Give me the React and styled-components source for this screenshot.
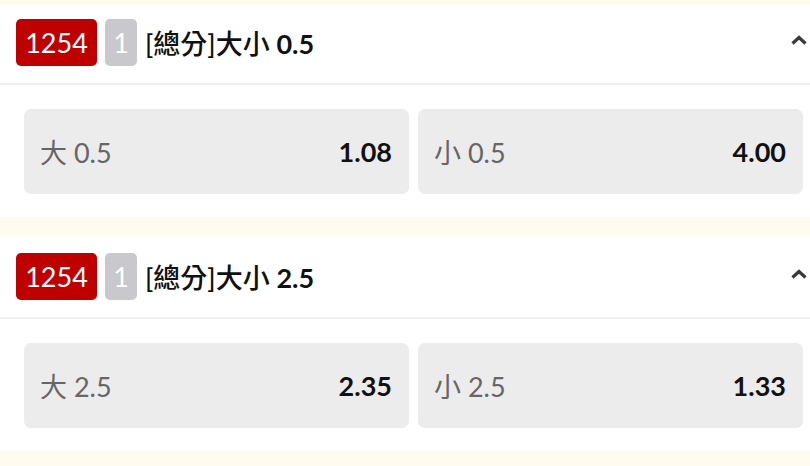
import * as React from 'react';
import styled, { createGlobalStyle } from 'styled-components';

const GlobalStyle = createGlobalStyle`
    html, body {
        margin: 0;
        padding: 0;
        background: #FFFBEE;
    }
    * {
        box-sizing: border-box;
    }
`;

const Page = styled.div`
    width: 810px;
    height: 466px;
    overflow: hidden;
    padding-top: 5px;
    display: flex;
    flex-direction: column;
    gap: 18px;
    font-family: Lato, "Noto Sans CJK TC", sans-serif;
`;

const Card = styled.div`
    background: #FFFFFF;
`;

const Header = styled.div`
    display: flex;
    align-items: center;
    justify-content: space-between;
    padding: ${p => p.$top}px 2px 17px 16px;
    border-bottom: 2px solid #EFEFEF;
`;

const Row = styled.div`
    display: flex;
    align-items: center;
`;

const Badge = styled.div`
    height: 47px;
    width: ${p => p.$w}px;
    background: ${p => p.$bg};
    border-radius: 5px;
    color: #FFFFFF;
    font-size: 27px;
    line-height: 47px;
    text-align: center;
    margin-right: 8px;
`;

const Title = styled.span`
    font-weight: 500;
    font-size: 27px;
    color: #111111;
`;

const Num = styled.span`
    font-weight: 700;
`;

const Chevron = styled.div`
    width: 18px;
    height: 12px;
    display: flex;
    margin-top: -6px;
`;

const Main = styled.div`
    display: grid;
    grid-template-columns: 385px 385px;
    gap: 9px;
    padding: 24px 7px 23px 24px;
`;

const OddsBtn = styled.div`
    height: 85px;
    background: #ECECEC;
    border-radius: 7px;
    display: flex;
    align-items: center;
    justify-content: space-between;
    padding: 0 17px 0 16px;
`;

const Label = styled.span`
    font-size: 27px;
    color: #666666;
`;

const Odds = styled.span`
    font-size: 27px;
    font-weight: 700;
    color: #111111;
`;

const markets = [
    { id: '1254', no: '1', line: '0.5', over: '1.08', under: '4.00', top: 14 },
    { id: '1254', no: '1', line: '2.5', over: '2.35', under: '1.33', top: 18 },
];

function UpIcon() {
    return (
        <svg width="18" height="12" viewBox="0 0 18 12">
            <path d="M2.5 9.5 L9 3.5 L15.5 9.5" fill="none" stroke="#3A3A3A" strokeWidth="3.2" strokeLinejoin="miter" />
        </svg>
    );
}

function Market({ m }) {
    return (
        <Card>
            <Header $top={m.top}>
                <Row>
                    <Badge $bg="#BF0000" $w={81}>{m.id}</Badge>
                    <Badge $bg="#C8C8CD" $w={32}>{m.no}</Badge>
                    <Title>[總分]大小 <Num>{m.line}</Num></Title>
                </Row>
                <Chevron>
                    <UpIcon />
                </Chevron>
            </Header>
            <Main>
                <OddsBtn>
                    <Label>大 {m.line}</Label>
                    <Odds>{m.over}</Odds>
                </OddsBtn>
                <OddsBtn>
                    <Label>小 {m.line}</Label>
                    <Odds>{m.under}</Odds>
                </OddsBtn>
            </Main>
        </Card>
    );
}

export default function App() {
    return (
        <>
            <GlobalStyle />
            <Page>
                {markets.map((m, i) => <Market key={i} m={m} />)}
            </Page>
        </>
    );
}
